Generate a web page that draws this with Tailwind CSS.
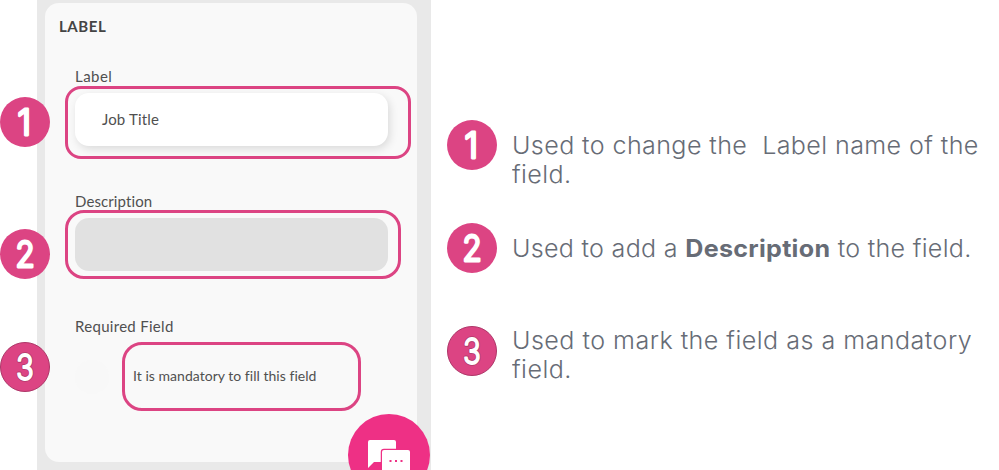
<!DOCTYPE html>
<html lang="en">
<head>
<meta charset="utf-8">
<title>Label settings</title>
<script src="https://cdn.jsdelivr.net/npm/@tailwindcss/browser@4"></script>
</head>
<body class="bg-white">
<svg class="hidden">
  <defs>
    <g id="n1" font-weight="300"><circle cx="25" cy="25" r="25" fill="#dc4483"/><text transform="translate(24.300 38.300) scale(.95 1)" text-anchor="middle" font-family="Inter, sans-serif" font-size="36" fill="#fff" stroke="#fff" stroke-width="2.800" stroke-linejoin="round">1</text></g>
    <g id="n2" font-weight="300"><circle cx="25" cy="25" r="25" fill="#dc4483"/><text transform="translate(25 38.300) scale(.87 1)" text-anchor="middle" font-family="Inter, sans-serif" font-size="36" fill="#fff" stroke="#fff" stroke-width="2.800" stroke-linejoin="round">2</text></g>
    <g id="n3" font-weight="300"><circle cx="25" cy="25" r="24.500" fill="#dc4483" stroke="#ad3768"/><text transform="translate(25 38) scale(.84 1)" text-anchor="middle" font-family="Inter, sans-serif" font-size="35" fill="#fff" stroke="#b13a6b" stroke-width="3.600" stroke-linejoin="round">3</text><text transform="translate(25 38) scale(.84 1)" text-anchor="middle" font-family="Inter, sans-serif" font-size="35" fill="#fff" stroke="#fff" stroke-width="1.800" stroke-linejoin="round">3</text></g>
  </defs>
</svg>
<main class="relative flex h-[470px] w-[999px] overflow-hidden pl-[37px]">
  <section class="h-[470px] w-[394px] shrink-0 bg-[#e9e9e9] pt-[3px] pl-2 font-['Lato','Open_Sans',sans-serif] text-[#505050]">
    <div class="h-[459px] w-[372px] rounded-[14px] bg-[#f9f9f9] pt-[13px] pl-[14px]">
      <h1 class="h-5 text-[15px] leading-[20px] font-bold text-[#444]"><span class="tracking-[0.55px]">LABEL</span></h1>
      <div class="pl-[6px]">
        <div class="mt-[30px] h-5 pl-[10px] text-[15px] leading-[20px]"><span class="tracking-[0.45px]">Label</span></div>
        <div class="h-[73px] w-[346px] rounded-[16px] border-3 border-[#dc4483] pt-1 pl-[7px]">
          <div class="h-[53px] w-[313px] rounded-[14px] bg-white pl-[27px] text-[15px] leading-[52px] shadow-[2px_3px_8px_#00000020]"><span class="tracking-[0.15px]">Job Title</span></div>
        </div>
        <div class="mt-8 h-[19px] pl-[10px] text-[15px] leading-[20px]"><span class="tracking-[0.1px]">Description</span></div>
        <div class="h-[69px] w-[336px] rounded-[19px] border-3 border-[#dc4483] pt-[5px] pl-[7px]">
          <div class="h-[53px] w-[313px] rounded-[14px] bg-[#e1e1e1]"></div>
        </div>
        <div class="mt-[37px] h-5 pl-[10px] text-[15px] leading-[20px]"><span class="tracking-[0.3px]">Required Field</span></div>
        <div class="mt-[6px] flex items-center pl-[10px]">
          <div class="size-[34px] rounded-full bg-[#f8f8f8]"></div>
          <div class="ml-[13px] h-[69px] w-[239px] rounded-[20px] border-3 border-[#dc4483] pl-[8px] text-[14px] leading-[61px] whitespace-nowrap"><span class="tracking-[0.03px]">It is mandatory to fill this field</span></div>
        </div>
      </div>
    </div>
  </section>
  <section class="w-[568px] pt-[120px] pl-4 font-['Inter',sans-serif] text-[24px] leading-[29px] font-light text-[#676c76]">
    <div class="flex h-[103px]">
      <svg class="size-[50px] shrink-0"><use href="#n1"/></svg>
      <p class="ml-[15px] origin-left scale-x-[1.045] pt-[11px] tracking-[0.38px] whitespace-pre">Used to change the  Label name of the<br>field.</p>
    </div>
    <div class="flex h-[103px]">
      <svg class="size-[50px] shrink-0"><use href="#n2"/></svg>
      <p class="ml-[15px] origin-left scale-x-[1.045] pt-[11px] tracking-[0.28px] whitespace-pre">Used to add a <b class="font-bold">Description</b> to the field.</p>
    </div>
    <div class="flex">
      <svg class="size-[50px] shrink-0"><use href="#n3"/></svg>
      <p class="ml-[15px] origin-left scale-x-[1.045] tracking-[0.45px] whitespace-pre">Used to mark the field as a mandatory<br>field.</p>
    </div>
  </section>
  <svg class="absolute top-[97px] left-0 size-[50px]"><use href="#n1"/></svg>
  <svg class="absolute top-[229px] left-0 size-[50px]"><use href="#n2"/></svg>
  <svg class="absolute top-[342px] left-0 size-[50px]"><use href="#n3"/></svg>
  <svg class="absolute top-[414px] left-[348px] h-[56px] w-[82px]" viewBox="0 0 82 56">
    <circle cx="41" cy="41" r="41" fill="#ee3085"/>
    <path d="M20 54V28q0-2 2-2h24q2 0 2 2v20H26z" fill="#fff"/>
    <path d="M34 60V38q0-2 2-2h24q2 0 2 2v22z" fill="#fff" stroke="#ee3085" stroke-width="2.500" paint-order="stroke"/>
    <path d="M41.500 46h2v2h-2zM47 46h2v2h-2zM52.500 46h2v2h-2z" fill="#ee3085"/>
  </svg>
</main>
</body>
</html>
